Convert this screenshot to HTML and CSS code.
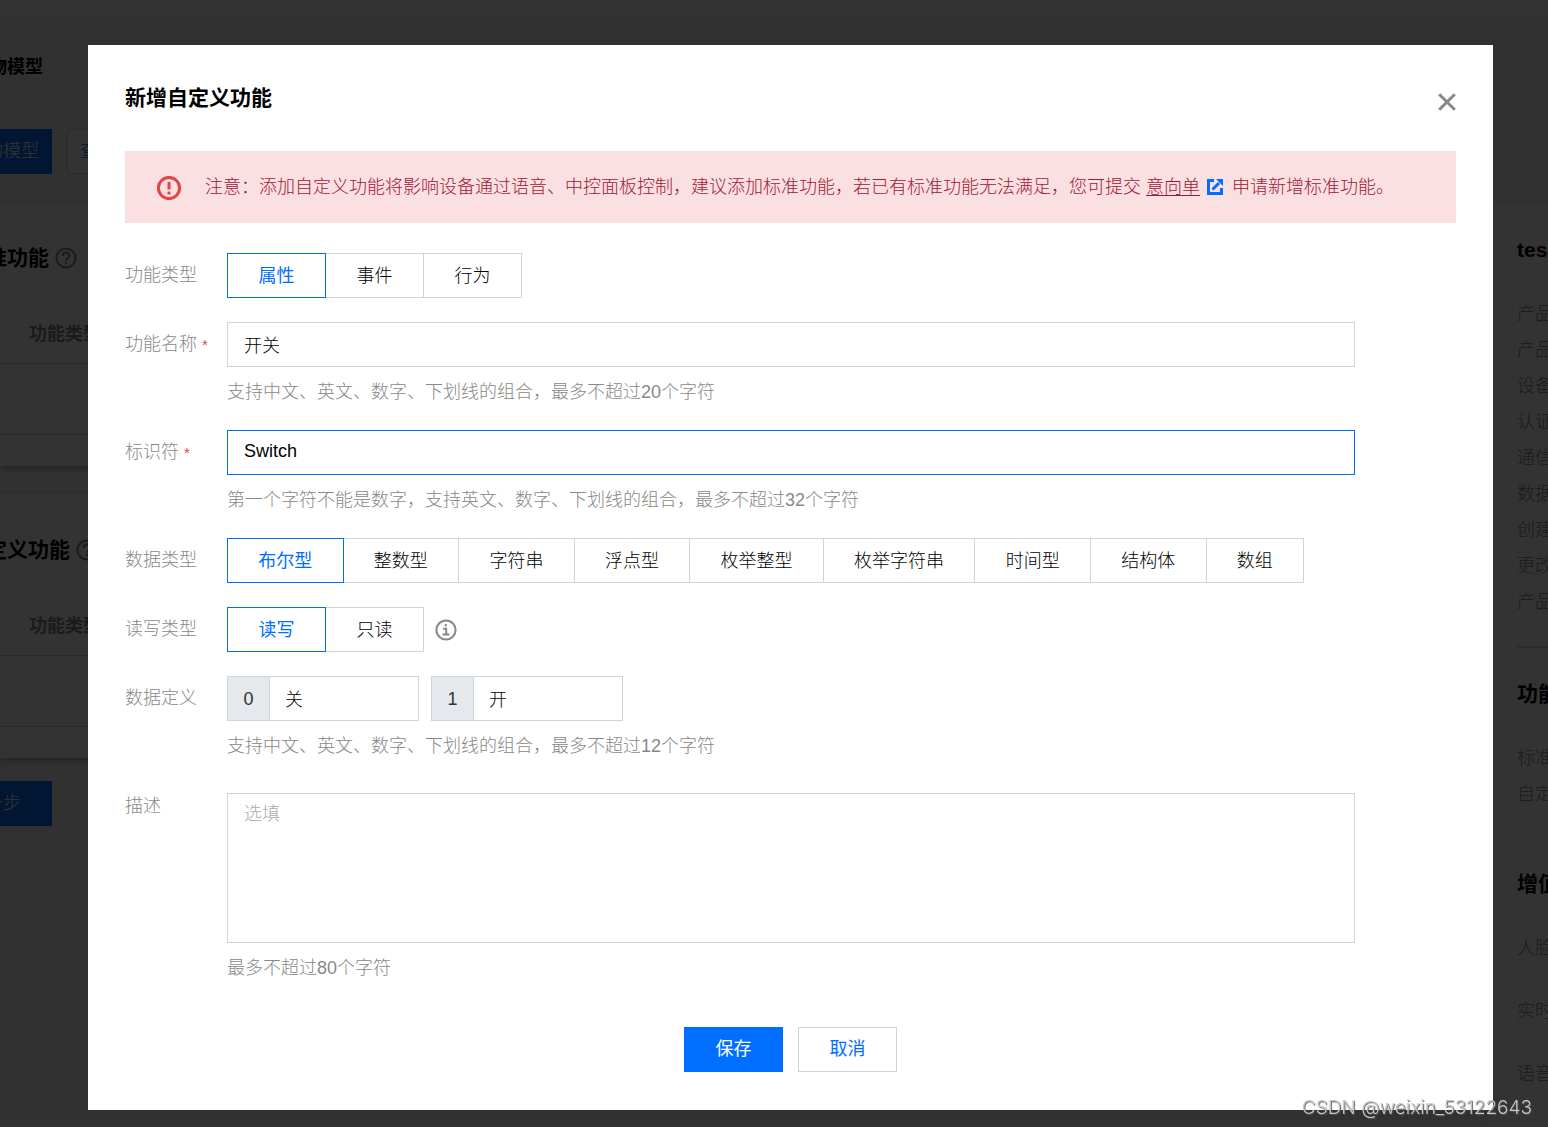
FILE: index.html
```html
<!DOCTYPE html>
<html lang="zh-CN">
<head>
    <meta charset="UTF-8">
    <meta name="viewport" content="width=device-width, initial-scale=1.0">
    <title>新增自定义功能</title>
    <link rel="stylesheet" href="styles.css">
</head>
<body>

<!-- 底层页面 -->
<div class="page" inert>
    <div class="page-top"></div>
    <header class="page-header">
        <h2 class="page-title">物模型</h2>
        <div class="page-actions">
            <button type="button" class="page-btn page-btn-primary">物模型</button>
            <button type="button" class="page-btn">查看</button>
        </div>
    </header>
    <div class="page-body">
        <main class="page-main">
            <section class="card">
                <h3 class="card-title">标准功能
                    <svg class="help-icon" viewBox="0 0 22 22"><circle cx="11" cy="11" r="9.5"/><path d="M7.8 9a3.2 3.2 0 1 1 4.6 2.6c-1 .5-1.4 1-1.4 2M11 15v2"/></svg>
                </h3>
                <div class="card-head">功能类型</div>
                <div class="card-row"></div>
            </section>
            <section class="card">
                <h3 class="card-title">自定义功能
                    <svg class="help-icon" viewBox="0 0 22 22"><circle cx="11" cy="11" r="9.5"/><path d="M7.8 9a3.2 3.2 0 1 1 4.6 2.6c-1 .5-1.4 1-1.4 2M11 15v2"/></svg>
                </h3>
                <div class="card-head">功能类型</div>
                <div class="card-row"></div>
            </section>
            <button type="button" class="page-btn page-btn-primary page-next">下一步</button>
        </main>
        <aside class="sidebar">
            <h3 class="sidebar-title">tes</h3>
            <ul class="sidebar-list">
                <li>产品</li>
                <li>产品</li>
                <li>设备</li>
                <li>认证</li>
                <li>通信</li>
                <li>数据</li>
                <li>创建</li>
                <li>更改</li>
                <li>产品</li>
            </ul>
            <hr class="sidebar-line">
            <h3 class="sidebar-title">功能</h3>
            <ul class="sidebar-list">
                <li>标准</li>
                <li>自定</li>
            </ul>
            <h3 class="sidebar-title sidebar-extra">增值</h3>
            <ul class="sidebar-list sidebar-services">
                <li>人脸</li>
                <li>实时</li>
                <li>语音</li>
            </ul>
        </aside>
    </div>
</div>

<!-- 弹窗 -->
<div class="overlay">
    <div class="modal" role="dialog" aria-labelledby="modal-title">
        <div class="modal-header">
            <h1 class="modal-title" id="modal-title">新增自定义功能</h1>
            <button type="button" class="close-btn" aria-label="关闭">
                <svg viewBox="0 0 18 18"><path d="M1.2 1.2l15.6 15.6M16.8 1.2L1.2 16.8"/></svg>
            </button>
        </div>

        <div class="alert">
            <svg class="alert-icon" viewBox="0 0 24 24"><circle cx="12" cy="12" r="10.6"/><path d="M12 6v7.5M12 15.5v3"/></svg>
            <p class="alert-text">注意：添加自定义功能将影响设备通过语音、中控面板控制，建议添加标准功能，若已有标准功能无法满足，您可提交 <a class="alert-link" href="#">意向单<svg class="link-icon" viewBox="0 0 16 16"><path d="M7 1.5H1.5v13h13V9M5.5 10.5L12 4"/><path class="link-arrow" d="M9 0h7v7z"/></svg></a>申请新增标准功能。</p>
        </div>

        <form class="form">
            <div class="form-row">
                <span class="form-label" id="func-type">功能类型</span>
                <div class="segment" role="radiogroup" aria-labelledby="func-type">
                    <input type="radio" name="func" id="func-0" checked><label for="func-0">属性</label>
                    <input type="radio" name="func" id="func-1"><label for="func-1">事件</label>
                    <input type="radio" name="func" id="func-2"><label for="func-2">行为</label>
                </div>
            </div>

            <div class="form-row">
                <label class="form-label" for="func-name">功能名称<span class="required">*</span></label>
                <div class="form-control">
                    <input type="text" class="input" id="func-name" value="开关">
                    <p class="form-help">支持中文、英文、数字、下划线的组合，最多不超过20个字符</p>
                </div>
            </div>

            <div class="form-row">
                <label class="form-label" for="func-id">标识符<span class="required">*</span></label>
                <div class="form-control">
                    <input type="text" class="input input-active" id="func-id" value="Switch">
                    <p class="form-help">第一个字符不能是数字，支持英文、数字、下划线的组合，最多不超过32个字符</p>
                </div>
            </div>

            <div class="form-row">
                <span class="form-label" id="data-type">数据类型</span>
                <div class="segment segment-wide" role="radiogroup" aria-labelledby="data-type">
                    <input type="radio" name="data" id="data-0" checked><label for="data-0">布尔型</label>
                    <input type="radio" name="data" id="data-1"><label for="data-1">整数型</label>
                    <input type="radio" name="data" id="data-2"><label for="data-2">字符串</label>
                    <input type="radio" name="data" id="data-3"><label for="data-3">浮点型</label>
                    <input type="radio" name="data" id="data-4"><label for="data-4">枚举整型</label>
                    <input type="radio" name="data" id="data-5"><label for="data-5">枚举字符串</label>
                    <input type="radio" name="data" id="data-6"><label for="data-6">时间型</label>
                    <input type="radio" name="data" id="data-7"><label for="data-7">结构体</label>
                    <input type="radio" name="data" id="data-8"><label for="data-8">数组</label>
                </div>
            </div>

            <div class="form-row">
                <span class="form-label" id="rw-type">读写类型</span>
                <div class="form-inline">
                    <div class="segment" role="radiogroup" aria-labelledby="rw-type">
                        <input type="radio" name="rw" id="rw-0" checked><label for="rw-0">读写</label>
                        <input type="radio" name="rw" id="rw-1"><label for="rw-1">只读</label>
                    </div>
                    <svg class="info-icon" viewBox="0 0 22 22"><circle cx="11" cy="11" r="9.6"/><path d="M10.8 5v2.4M8 9.8h3.2v5.6M7.6 15.6h6.8"/></svg>
                </div>
            </div>

            <div class="form-row">
                <span class="form-label">数据定义</span>
                <div class="form-control">
                    <div class="form-inline">
                        <div class="input-group">
                            <label class="input-addon" for="def-0">0</label>
                            <input type="text" class="input" id="def-0" value="关">
                        </div>
                        <div class="input-group">
                            <label class="input-addon" for="def-1">1</label>
                            <input type="text" class="input" id="def-1" value="开">
                        </div>
                    </div>
                    <p class="form-help">支持中文、英文、数字、下划线的组合，最多不超过12个字符</p>
                </div>
            </div>

            <div class="form-row">
                <label class="form-label" for="desc">描述</label>
                <div class="form-control">
                    <textarea class="input textarea" id="desc" placeholder="选填"></textarea>
                    <p class="form-help">最多不超过80个字符</p>
                </div>
            </div>
        </form>

        <div class="modal-footer">
            <button type="button" class="btn btn-primary">保存</button>
            <button type="button" class="btn">取消</button>
        </div>
    </div>
</div>

<div class="watermark">CSDN @weixin_53122643</div>

</body>
</html>
```
FILE: styles.css
```css
* {
    box-sizing: border-box;
}

body {
    margin: 0;
    overflow: hidden;
    font-family: "Liberation Sans", "Noto Sans CJK SC", sans-serif;
    font-size: 18px;
    font-weight: 300;
    line-height: 27px;
    color: #000;
}

h1, h2, h3, p, ul {
    margin: 0;
    padding: 0;
}

button, input, textarea {
    font: inherit;
}

svg {
    fill: none;
    flex-shrink: 0;
}

/* 底层页面 */
.page {
    display: flex;
    flex-direction: column;
    height: 100vh;
    overflow: hidden;
    white-space: nowrap;
    background-color: #f2f2f2;
}

.page-top {
    height: 18px;
    background-color: #fff;
}

.page-header {
    height: 186px;
    padding-top: 36px;
}

.page-title {
    margin-left: -11px;
    font-size: 18px;
}

.page-actions {
    display: flex;
    gap: 15px;
    margin: 48px 0 0 -28px;
}

.page-btn {
    height: 45px;
    padding: 0 12px;
    border: 1px solid #cfd5de;
    background-color: #fff;
    color: #006eff;
}

.page-btn-primary {
    border-color: #006eff;
    background-color: #006eff;
    color: #fff;
}

.page-next {
    align-self: flex-start;
    margin: -5px 0 0 -64px;
    padding: 0 30px;
}

.page-body {
    display: flex;
    flex: 1;
    min-height: 0;
}

.page-main {
    display: flex;
    flex: 1;
    flex-direction: column;
    gap: 28px;
}

.card {
    height: 262px;
    padding: 36px 0 30px;
    background-color: #fff;
    box-shadow: 0 3px 5px rgba(0, 0, 0, 0.25);
}

.card + .card {
    height: 264px;
    padding-top: 38px;
}

.card-title {
    display: flex;
    align-items: center;
    gap: 6px;
    margin-left: -35px;
    font-size: 21px;
    line-height: 36px;
}

.help-icon {
    width: 22px;
    height: 22px;
    stroke: #888;
    stroke-width: 2;
}

.card-head {
    height: 88px;
    padding: 45px 0 0 29px;
    border-bottom: 1px solid #cfd5de;
    font-weight: bold;
    color: #888;
}

.card-row {
    height: 71px;
    border-bottom: 1px solid #cfd5de;
}

.sidebar {
    width: 60px;
    padding: 28px 0 0 29px;
    overflow: hidden;
    background-color: #fff;
}

.sidebar-title {
    font-size: 21px;
    line-height: 36px;
}

.sidebar-list {
    margin-top: 28px;
    line-height: 36px;
    list-style: none;
    color: #888;
}

.sidebar-line {
    margin: 26px 0 28px;
    border: 0;
    border-top: 2px solid #ddd;
}

.sidebar-extra {
    margin-top: 54px;
}

.sidebar-services {
    display: flex;
    flex-direction: column;
    gap: 27px;
}

/* 遮罩与弹窗 */
.overlay {
    position: fixed;
    inset: 0;
    padding: 45px 55px 17px 88px;
    background-color: rgba(0, 0, 0, 0.8);
}

.modal {
    padding: 36px 37px 38px;
    background-color: #fff;
}

.modal-header {
    display: flex;
    justify-content: space-between;
    height: 36px;
}

.modal-title {
    font-size: 21px;
    line-height: 34px;
}

.close-btn {
    padding: 6px 0 0;
    border: none;
    background: none;
    cursor: pointer;
}

.close-btn svg {
    display: block;
    width: 18px;
    height: 18px;
    stroke: #888;
    stroke-width: 3;
}

.alert {
    display: flex;
    align-items: center;
    gap: 24px;
    margin: 34px 0 30px;
    padding: 23px 32px 22px;
    background-color: #fae0e0;
    color: #a0173c;
}

.alert-icon {
    width: 24px;
    height: 24px;
    stroke: #e54545;
    stroke-width: 3;
}

.alert-link {
    color: inherit;
    text-underline-offset: 2px;
}

.link-icon {
    width: 16px;
    height: 16px;
    margin: 0 9px 0 7px;
    vertical-align: -2px;
    stroke: #006eff;
    stroke-width: 3;
}

.link-arrow {
    fill: #006eff;
    stroke: none;
}

/* 表单 */
.form {
    display: flex;
    flex-direction: column;
    gap: 24px;
    padding-right: 101px;
}

.form-row {
    display: grid;
    grid-template-columns: 102px 1fr;
}

.form-label {
    line-height: 45px;
    color: #888;
}

.required {
    margin-left: 5px;
    font-size: 15px;
    color: #e54545;
}

.form-help {
    margin-top: 12px;
    color: #888;
}

.form-inline {
    display: flex;
    align-items: center;
    gap: 11px;
}

.input {
    display: block;
    width: 100%;
    height: 45px;
    padding: 0 16px 2px;
    border: 1px solid #cfd5de;
    border-radius: 0;
    outline: none;
    background-color: #fff;
    color: #000;
}

.input:focus,
.input-active {
    border-color: #006eff;
}

.textarea {
    height: 150px;
    margin-top: 9px;
    padding: 7px 16px;
    resize: none;
}

.textarea::placeholder {
    color: #aaa;
}

.input-group {
    display: flex;
    width: 192px;
}

.input-group .input {
    flex: 1;
    min-width: 0;
    padding: 0 15px 2px;
}

.input-addon {
    width: 42px;
    height: 45px;
    border: 1px solid #cfd5de;
    border-right: none;
    background-color: #e5e8ed;
    line-height: 45px;
    text-align: center;
    color: #333;
}

.segment {
    display: flex;
}

.segment-wide {
    max-width: 1077px;
}

.segment input {
    position: absolute;
    opacity: 0;
}

.segment label {
    min-width: 99px;
    height: 45px;
    padding: 0 30px;
    border: 1px solid #cfd5de;
    line-height: 45px;
    text-align: center;
    white-space: nowrap;
    cursor: pointer;
}

.segment-wide label {
    flex: 1 0 auto;
    min-width: 0;
}

.segment label:not(:first-of-type) {
    margin-left: -1px;
}

.segment input:checked + label {
    z-index: 1;
    border-color: #006eff;
    font-weight: 400;
    color: #006eff;
}

.info-icon {
    width: 22px;
    height: 22px;
    stroke: #888;
    stroke-width: 2;
}

.modal-footer {
    display: flex;
    justify-content: center;
    gap: 15px;
    margin-top: 45px;
}

.btn {
    min-width: 99px;
    height: 45px;
    border: 1px solid #cfd5de;
    background-color: #fff;
    font-weight: 400;
    color: #006eff;
    cursor: pointer;
}

.btn-primary {
    border-color: #006eff;
    background-color: #006eff;
    color: #fff;
}

.input-group + .input-group {
    margin-left: 1px;
}

.watermark {
    position: fixed;
    right: 16px;
    bottom: 6px;
    font-family: Inter, sans-serif;
    font-size: 19px;
    color: #c8c8c8;
    text-shadow: 1px 1px 1px #555;
}
```
